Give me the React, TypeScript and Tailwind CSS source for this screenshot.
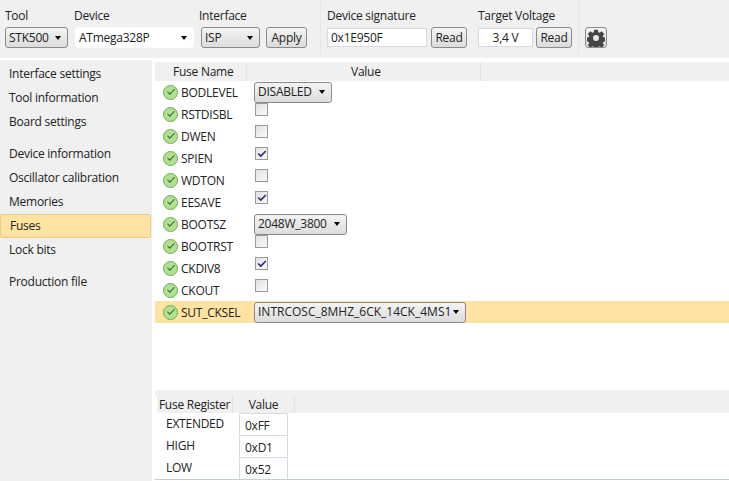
import type { ReactNode } from 'react';
import { Check } from 'lucide-react';

const font = "font-['Open_Sans','Noto_Sans',sans-serif]";

function Combo({ label, className = '' }: { label: string; className?: string }) {
  return (
    <div className={`flex items-center justify-between h-[21px] px-[3px] rounded-[3px] border border-[#8a8a8a] bg-gradient-to-b from-[#f4f4f4] to-[#dcdcdc] text-[12px] text-[#222] ${className}`}>
      <span className="whitespace-nowrap">{label}</span>
      <span className="w-0 h-0 mr-[3px] border-x-[3px] border-x-transparent border-t-[4px] border-t-black" />
    </div>
  );
}

function Btn({ children, className = '' }: { children: ReactNode; className?: string }) {
  return (
    <div className={`flex items-center justify-center h-[21px] rounded-[3px] border border-[#8a8a8a] bg-gradient-to-b from-[#f4f4f4] to-[#dcdcdc] text-[12px] text-[#222] ${className}`}>
      {children}
    </div>
  );
}

function Field({ value, className = '' }: { value: string; className?: string }) {
  return (
    <div className={`flex items-center h-[19px] bg-white border border-[#d3dae4] text-[12px] text-[#222] ${className}`}>
      {value}
    </div>
  );
}

function Gear() {
  return (
    <svg width="18" height="18" viewBox="0 0 24 24">
      <path
        fill="#454545"
        fillRule="evenodd"
        d="M9.5 1h5l.6 3.2 1.7.7 2.7-1.8 3.4 3.4-1.8 2.7.7 1.7 3.2.6v5l-3.2.6-.7 1.7 1.8 2.7-3.4 3.4-2.7-1.8-1.7.7-.6 3.2h-5l-.6-3.2-1.7-.7-2.7 1.8-3.4-3.4 1.8-2.7-.7-1.7-3.2-.6v-5l3.2-.6.7-1.7-1.8-2.7 3.4-3.4 2.7 1.8 1.7-.7zM12 8a4 4 0 1 0 0 8 4 4 0 0 0 0-8z"
      />
    </svg>
  );
}

function Status() {
  return (
    <span className="flex items-center justify-center w-[15px] h-[15px] rounded-full bg-[#b0e092] border border-[#6fae55] shrink-0">
      <Check size={10} strokeWidth={2.5} color="#2f5f22" />
    </span>
  );
}

function Checkbox({ checked }: { checked?: boolean }) {
  return (
    <span className="flex items-center justify-center w-[13px] h-[13px] -mt-[9px] ml-px border border-[#9a9a9a] bg-gradient-to-br from-[#e2e2e2] to-[#fafafa]">
      {checked && <Check size={10} strokeWidth={4} color="#2d2d86" />}
    </span>
  );
}

const navGroups = [
  ['Interface settings', 'Tool information', 'Board settings'],
  ['Device information', 'Oscillator calibration', 'Memories', 'Fuses', 'Lock bits'],
  ['Production file'],
];

type Fuse = { name: string; combo?: string; comboW?: string; checked?: boolean; selected?: boolean };

const fuses: Fuse[] = [
  { name: 'BODLEVEL', combo: 'DISABLED', comboW: 'w-[78px]' },
  { name: 'RSTDISBL' },
  { name: 'DWEN' },
  { name: 'SPIEN', checked: true },
  { name: 'WDTON' },
  { name: 'EESAVE', checked: true },
  { name: 'BOOTSZ', combo: '2048W_3800', comboW: 'w-[93px]' },
  { name: 'BOOTRST' },
  { name: 'CKDIV8', checked: true },
  { name: 'CKOUT' },
  { name: 'SUT_CKSEL', combo: 'INTRCOSC_8MHZ_6CK_14CK_4MS1', comboW: 'w-[212px] tracking-normal', selected: true },
];

const registers = [
  ['EXTENDED', '0xFF'],
  ['HIGH', '0xD1'],
  ['LOW', '0x52'],
];

export default function App() {
  return (
    <div className={`w-[729px] h-[481px] overflow-hidden bg-white flex flex-col text-[12px] tracking-[-0.25px] text-[#222] ${font}`}>
      {/* toolbar */}
      <div className="h-[58px] bg-[#f0f0f0] flex pl-[5px] pt-[7px] shrink-0">
        <div className="flex flex-col w-[69px]">
          <span className="h-[19px]">Tool</span>
          <Combo label="STK500" className="w-[63px] mt-[1px]" />
        </div>
        <div className="flex flex-col w-[125px]">
          <span className="h-[19px]">Device</span>
          <Combo label="ATmega328P" className="w-[119px] ml-px mt-[1px] !border-white !bg-none bg-white pl-[3px]" />
        </div>
        <div className="flex flex-col w-[67px]">
          <span className="h-[19px]">Interface</span>
          <Combo label="ISP" className="w-[59px] ml-[2px] mt-[1px]" />
        </div>
        <Btn className="w-[41px] mt-[20px]">Apply</Btn>
        <div className="w-px h-[54px] bg-[#e6e6e6] ml-[13px] -mt-[7px]" />
        <div className="flex flex-col w-[151px] ml-[6px]">
          <span className="h-[19px]">Device signature</span>
          <div className="flex items-center gap-[4px] mt-[1px]">
            <Field value="0x1E950F" className="w-[100px] pl-[3px]" />
            <Btn className="w-[36px]">Read</Btn>
          </div>
        </div>
        <div className="flex flex-col w-[100px]">
          <span className="h-[19px]">Target Voltage</span>
          <div className="flex items-center gap-[3px] mt-[1px]">
            <Field value="3,4 V" className="w-[55px] justify-center" />
            <Btn className="w-[36px]">Read</Btn>
          </div>
        </div>
        <div className="w-px h-[54px] bg-[#e6e6e6] -mt-[7px]" />
        <Btn className="w-[22px] mt-[20px] ml-[6px]">
          <Gear />
        </Btn>
      </div>

      <div className="flex flex-1 mt-[2px] min-h-0">
        {/* left navigation */}
        <div className="w-[152px] bg-[#f0f0f0] pt-[2px] flex flex-col gap-[8px] shrink-0">
          {navGroups.map((group) => (
            <div key={group[0]} className="flex flex-col">
              {group.map((item) => (
                <div
                  key={item}
                  className={`h-[24px] flex items-center pl-[9px] ${
                    item === 'Fuses' ? 'w-[151px] bg-[#ffe3a3] border border-[#eecb82] rounded-[2px] pl-[8px]' : ''
                  }`}
                >
                  {item}
                </div>
              ))}
            </div>
          ))}
        </div>

        {/* content */}
        <div className="flex-1 flex flex-col pl-[3px] min-w-0">
          <div className="h-[19px] mt-[2px] bg-[#f0f0f0] flex shrink-0">
            <div className="w-[92px] pl-[18px] flex items-center border-r border-[#e2e2e2]">Fuse Name</div>
            <div className="w-[234px] pl-[104px] flex items-center border-r border-[#e2e2e2]">Value</div>
          </div>

          <div className="flex flex-col h-[309px] shrink-0">
            {fuses.map((f) => (
              <div key={f.name} className={`h-[22px] flex items-center pl-[8px] shrink-0 ${f.selected ? 'bg-[#ffe3a3]' : ''}`}>
                <Status />
                <span className="w-[76px] pl-[3px] pt-px shrink-0">{f.name}</span>
                {f.combo ? <Combo label={f.combo} className={f.comboW} /> : <Checkbox checked={f.checked} />}
              </div>
            ))}
          </div>

          <div className="h-[6px] bg-[#f0f0f0] shrink-0" />

          <div className="h-[17px] pl-[2px] flex shrink-0">
            <div className="flex flex-1 bg-[#f0f0f0]">
              <div className="w-[76px] flex items-center justify-center border-r border-[#e2e2e2]">Fuse Register</div>
              <div className="w-[62px] flex items-center justify-center border-r border-[#e2e2e2]">Value</div>
            </div>
          </div>

          <div className="flex flex-col border-b border-[#b9d2ea] h-[67px] shrink-0">
            {registers.map(([name, value]) => (
              <div key={name} className="h-[22px] flex shrink-0">
                <span className="w-[84px] pl-[11px] pt-[2px] shrink-0">{name}</span>
                <div className="w-[49px] h-[22px] flex items-center pl-[5px] pt-[3px] border border-[#d3dae4] border-b-0 rounded-t-[2px]">{value}</div>
              </div>
            ))}
          </div>
        </div>
      </div>
    </div>
  );
}
